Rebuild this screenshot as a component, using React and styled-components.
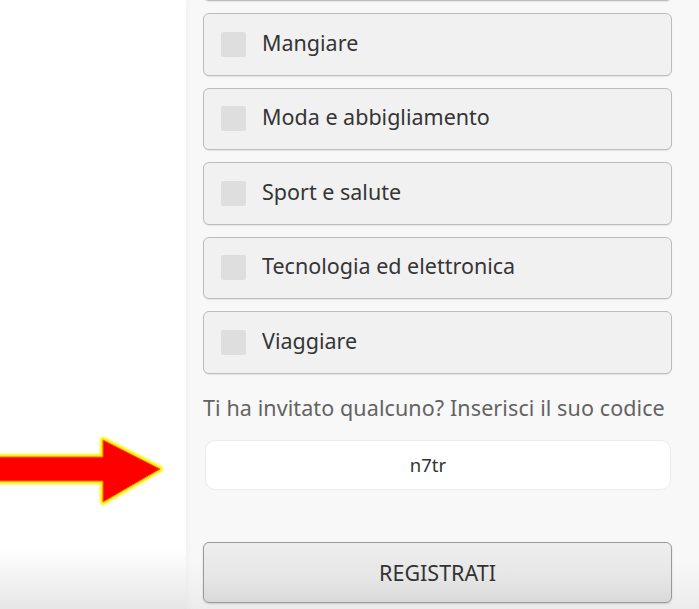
import React from "react";
import styled, { createGlobalStyle } from "styled-components";

const GlobalStyle = createGlobalStyle`
  html, body {
    margin: 0;
    padding: 0;
    background: #ffffff;
    overflow: hidden;
  }
  * {
    box-sizing: border-box;
  }
`;

const Page = styled.div`
  display: flex;
  width: 699px;
  height: 609px;
  overflow: hidden;
  font-family: "Noto Sans", "Open Sans", sans-serif;
`;

const Gutter = styled.div`
  position: relative;
  width: 186px;
  flex-shrink: 0;
  background: linear-gradient(to bottom, #ffffff 0%, #ffffff 90%, #e6e6e6 100%);
`;

const Arrow = styled.svg`
  position: absolute;
  left: -6px;
  top: 432px;
`;

const Panel = styled.div`
  flex: 1;
  display: flex;
  flex-direction: column;
  padding: 0 27px 0 17px;
  background: linear-gradient(to bottom, #f8f8f8 0%, #f8f8f8 92%, #ececec 100%);
  box-shadow: inset 6px 0 6px -4px rgba(0, 0, 0, 0.03);
`;

const CardList = styled.div`
  display: flex;
  flex-direction: column;
  gap: 12px;
  margin-top: -61.5px;
`;

const Card = styled.label`
  display: flex;
  align-items: center;
  gap: 16px;
  height: 62.5px;
  padding: 0 17px;
  background: #f1f1f1;
  border: 1.5px solid #bdbdbd;
  border-radius: 6px;
  box-shadow: 0 1px 1px rgba(0, 0, 0, 0.08);
`;

const Check = styled.span`
  width: 25px;
  height: 25px;
  border-radius: 2px;
  background: #dedede;
  flex-shrink: 0;
`;

const CardText = styled.span`
  font-size: 21.5px;
  line-height: 26px;
  margin-top: -3px;
  color: #353535;
`;

const InviteLabel = styled.div`
  margin-top: 21px;
  font-size: 21.5px;
  line-height: 26px;
  color: #636363;
  letter-spacing: 0.1px;
  white-space: nowrap;
`;

const CodeInput = styled.input`
  margin-top: 19px;
  margin-left: 2px;
  height: 50px;
  width: 466px;
  padding: 0 20px 0 0;
  border: 1.5px solid #ececec;
  border-radius: 10px;
  background: #ffffff;
  text-align: center;
  font-family: "Noto Sans", "Open Sans", sans-serif;
  font-size: 18.5px;
  color: #333333;
  outline: none;
`;

const SubmitButton = styled.button`
  margin-top: 52px;
  height: 61px;
  width: 469px;
  padding: 0;
  border: 1.5px solid #9a9a9a;
  border-radius: 6px;
  background: linear-gradient(to bottom, #eeeeee 0%, #e6e6e6 60%, #d9d9d9 100%);
  font-family: "Noto Sans", "Open Sans", sans-serif;
  font-size: 21.5px;
  color: #333333;
  box-shadow: 0 1px 2px rgba(0, 0, 0, 0.15);
`;

const interests = [
  "Mangiare",
  "Moda e abbigliamento",
  "Sport e salute",
  "Tecnologia ed elettronica",
  "Viaggiare",
];

const PointerArrow = () => (
  <Arrow width="180" height="80" viewBox="0 0 180 80">
    <defs>
      <filter id="glow" x="-10%" y="-20%" width="120%" height="140%">
        <feGaussianBlur stdDeviation="1.2" />
      </filter>
    </defs>
    <path
      d="M0 25 L109 25 L109 8 L166 37 L109 70 L109 49 L0 49 Z"
      fill="#ffee00"
      stroke="#ffee00"
      strokeWidth="6"
      strokeLinejoin="round"
      filter="url(#glow)"
    />
    <path
      d="M0 25 L109 25 L109 8 L166 37 L109 70 L109 49 L0 49 Z"
      fill="#ff0000"
      stroke="#e86a00"
      strokeWidth="1"
      strokeLinejoin="round"
    />
  </Arrow>
);

export default function App() {
  return (
    <Page>
      <GlobalStyle />
      <Gutter>
        <PointerArrow />
      </Gutter>
      <Panel>
        <CardList>
          {/* the card above is scrolled out of view, only its bottom edge shows */}
          <Card as="div" aria-hidden="true" />
          {interests.map((item) => (
            <Card key={item}>
              <Check />
              <CardText>{item}</CardText>
            </Card>
          ))}
        </CardList>
        <InviteLabel>Ti ha invitato qualcuno? Inserisci il suo codice</InviteLabel>
        <CodeInput type="text" value="n7tr" readOnly />
        <SubmitButton type="button">REGISTRATI</SubmitButton>
      </Panel>
    </Page>
  );
}
